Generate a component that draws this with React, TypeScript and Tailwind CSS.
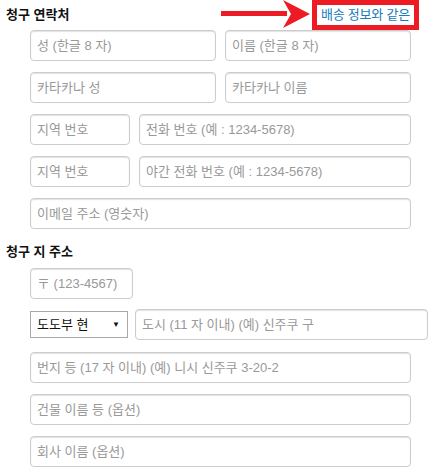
import React from "react";

const inputCls =
  "h-[31px] rounded-[4px] border border-[#cccccc] bg-white px-[6px] text-[13px] text-[#333] placeholder:text-[#999] shadow-[inset_0_1px_1px_rgba(0,0,0,0.12)] outline-none";

function Field({ ph, w }: { ph: string; w: string }) {
  return <input className={`${inputCls} ${w}`} placeholder={ph} />;
}

export default function App() {
  return (
    <div className="w-[436px] h-[476px] bg-white font-['Liberation_Sans','Noto_Sans_CJK_KR',sans-serif] overflow-hidden">
      {/* Header row */}
      <div className="flex h-[30px] items-center">
        <h2 className="pl-[6px] text-[13px] font-bold text-[#111] leading-none -mt-[2px]">청구 연락처</h2>
        <svg className="ml-auto" width="91" height="30" viewBox="0 0 91 30">
          <rect x="0" y="11" width="66" height="5" fill="#ed1c24" />
          <polygon points="62,0 89,14 62,28 70,14" fill="#ed1c24" />
        </svg>
        <a className="mr-[17px] flex h-[30px] w-[107px] items-center justify-center border-[5px] border-[#ed1c24] text-[13px] tracking-[-0.2px] text-[#1a7bbd] cursor-pointer">
          배송 정보와 같은
        </a>
      </div>

      {/* Contact fields */}
      <div className="flex flex-col gap-[11px] pl-[30px]">
        <div className="flex gap-[9px]">
          <Field ph="성 (한글 8 자)" w="w-[186px]" />
          <Field ph="이름 (한글 8 자)" w="w-[186px]" />
        </div>
        <div className="flex gap-[9px]">
          <Field ph="카타카나 성" w="w-[186px]" />
          <Field ph="카타카나 이름" w="w-[186px]" />
        </div>
        <div className="flex gap-[9px]">
          <Field ph="지역 번호" w="w-[100px]" />
          <Field ph="전화 번호 (예 : 1234-5678)" w="w-[272px]" />
        </div>
        <div className="flex gap-[9px]">
          <Field ph="지역 번호" w="w-[100px]" />
          <Field ph="야간 전화 번호 (예 : 1234-5678)" w="w-[272px]" />
        </div>
        <div className="flex">
          <Field ph="이메일 주소 (영숫자)" w="w-[381px]" />
        </div>
      </div>

      {/* Address heading */}
      <h2 className="pl-[6px] pt-[15px] pb-[8px] text-[13px] font-bold leading-[16px] text-[#111]">청구 지 주소</h2>

      <div className="flex flex-col pl-[30px]">
        <Field ph="〒 (123-4567)" w="w-[103px]" />
        <div className="mt-[10px] flex items-center gap-[7px]">
          <div className="flex h-[27px] w-[98px] items-center justify-between border border-[#a9a9a9] bg-white pl-[6px] pr-[7px] text-[13px] text-[#111]">
            <span>도도부 현</span>
            <span className="text-[8px] leading-none">▼</span>
          </div>
          <Field ph="도시 (11 자 이내) (예) 신주쿠 구" w="w-[293px]" />
        </div>
        <div className="mt-[12px] flex flex-col gap-[11px]">
          <Field ph="번지 등 (17 자 이내) (예) 니시 신주쿠 3-20-2" w="w-[381px]" />
          <Field ph="건물 이름 등 (옵션)" w="w-[381px]" />
          <Field ph="회사 이름 (옵션)" w="w-[381px]" />
        </div>
      </div>
    </div>
  );
}
